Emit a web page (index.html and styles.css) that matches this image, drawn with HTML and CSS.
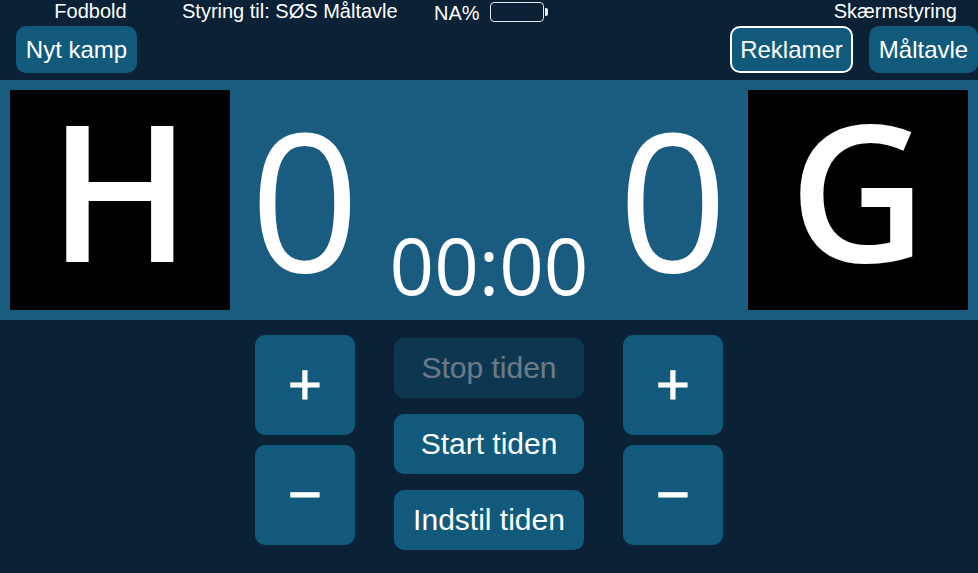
FILE: index.html
```html
<!DOCTYPE html>
<html lang="da">
<head>
<meta charset="utf-8">
<title>Måltavle</title>
<link rel="stylesheet" href="styles.css">
</head>
<body>
<div class="app">
  <header class="top">
    <div class="top-left">
      <div class="label sport">Fodbold</div>
      <button class="btn btn-new">Nyt kamp</button>
    </div>
    <div class="status">
      <span class="label target">Styring til: SØS Måltavle</span>
      <span class="label pct">NA%</span>
      <span class="battery"></span>
    </div>
    <div class="top-right">
      <div class="label screen">Skærmstyring</div>
      <div class="screen-btns">
        <button class="btn btn-ads">Reklamer</button>
        <button class="btn btn-board">Måltavle</button>
      </div>
    </div>
  </header>
  <section class="board">
    <div class="team">H</div>
    <div class="score">0</div>
    <div class="clock">00:00</div>
    <div class="score">0</div>
    <div class="team">G</div>
  </section>
  <section class="controls">
    <div class="steppers">
      <button class="btn step">+</button>
      <button class="btn step">−</button>
    </div>
    <div class="time-btns">
      <button class="btn time disabled">Stop tiden</button>
      <button class="btn time">Start tiden</button>
      <button class="btn time">Indstil tiden</button>
    </div>
    <div class="steppers">
      <button class="btn step">+</button>
      <button class="btn step">−</button>
    </div>
  </section>
</div>
</body>
</html>
```

FILE: styles.css
```css
* { box-sizing: border-box; }
html, body { margin: 0; height: 100%; }
body {
  background: #0a2136;
  font-family: "Liberation Sans", Arial, sans-serif;
  color: #fff;
  overflow: hidden;
}
.app { width: 978px; height: 573px; display: flex; flex-direction: column; }
.top { height: 80px; display: flex; justify-content: space-between; padding: 0 0 0 16px; }
.label { font-size: 20px; line-height: 23px; }
.top-left { width: 121px; }
.sport { text-align: center; padding: 0 0 0 27px; width: 122px; height: 26px; }
.btn {
  border: 0;
  margin: 0;
  padding: 0;
  background: #125a7b;
  color: #fff;
  font-family: inherit;
  border-radius: 10px;
  display: block;
}
.btn-new { width: 121px; height: 47px; font-size: 24px; }
.status { display: flex; align-items: flex-start; margin-left: 45px; }
.target { width: 252px; }
.pct { width: 56px; padding-top: 2px; }
.battery {
  position: relative;
  width: 54px;
  height: 20px;
  margin-top: 2px;
  border: 1px solid #fff;
  border-radius: 4px;
  opacity: .9;
}
.battery::after {
  content: "";
  position: absolute;
  right: -5px;
  top: 5px;
  width: 3px;
  height: 8px;
  background: #fff;
  border-radius: 0 2px 2px 0;
}
.top-right { width: 248px; margin-left: auto; }
.screen { text-align: right; padding: 0 21px 0 0; height: 26px; }
.screen-btns { display: flex; justify-content: space-between; }
.btn-ads { width: 123px; height: 47px; font-size: 24px; border: 2px solid #fff; }
.btn-board { width: 109px; height: 47px; font-size: 24px; }
.board {
  height: 240px;
  background: #1a5b80;
  padding: 10px;
  display: flex;
}
.team {
  width: 220px;
  height: 220px;
  background: #000;
  font-family: "Open Sans", sans-serif;
  font-weight: 600;
  font-size: 190px;
  line-height: 198px;
  text-align: center;
  flex: none;
}
.score {
  width: 110px;
  margin: 0 20px;
  font-family: "Open Sans", sans-serif;
  font-size: 192px;
  line-height: 216px;
  text-align: center;
  flex: none;
}
.clock {
  font-family: "Open Sans", sans-serif;
  font-size: 78px;
  line-height: 100px;
  align-self: flex-end;
  margin: 0 -25px -5px;
  text-align: center;
  height: 100px;
  flex: 1;
}
.controls { flex: 1; display: flex; justify-content: center; gap: 39px; padding-top: 15px; }
.steppers { display: flex; flex-direction: column; gap: 10px; }
.step { width: 100px; height: 100px; padding-bottom: 2px; font-size: 58px; line-height: 1; -webkit-text-stroke: 1px #fff; }
.time-btns { display: flex; flex-direction: column; gap: 16px; padding-top: 3px; }
.time { width: 190px; height: 60px; font-size: 30px; }
.disabled { opacity: .4; }
```
